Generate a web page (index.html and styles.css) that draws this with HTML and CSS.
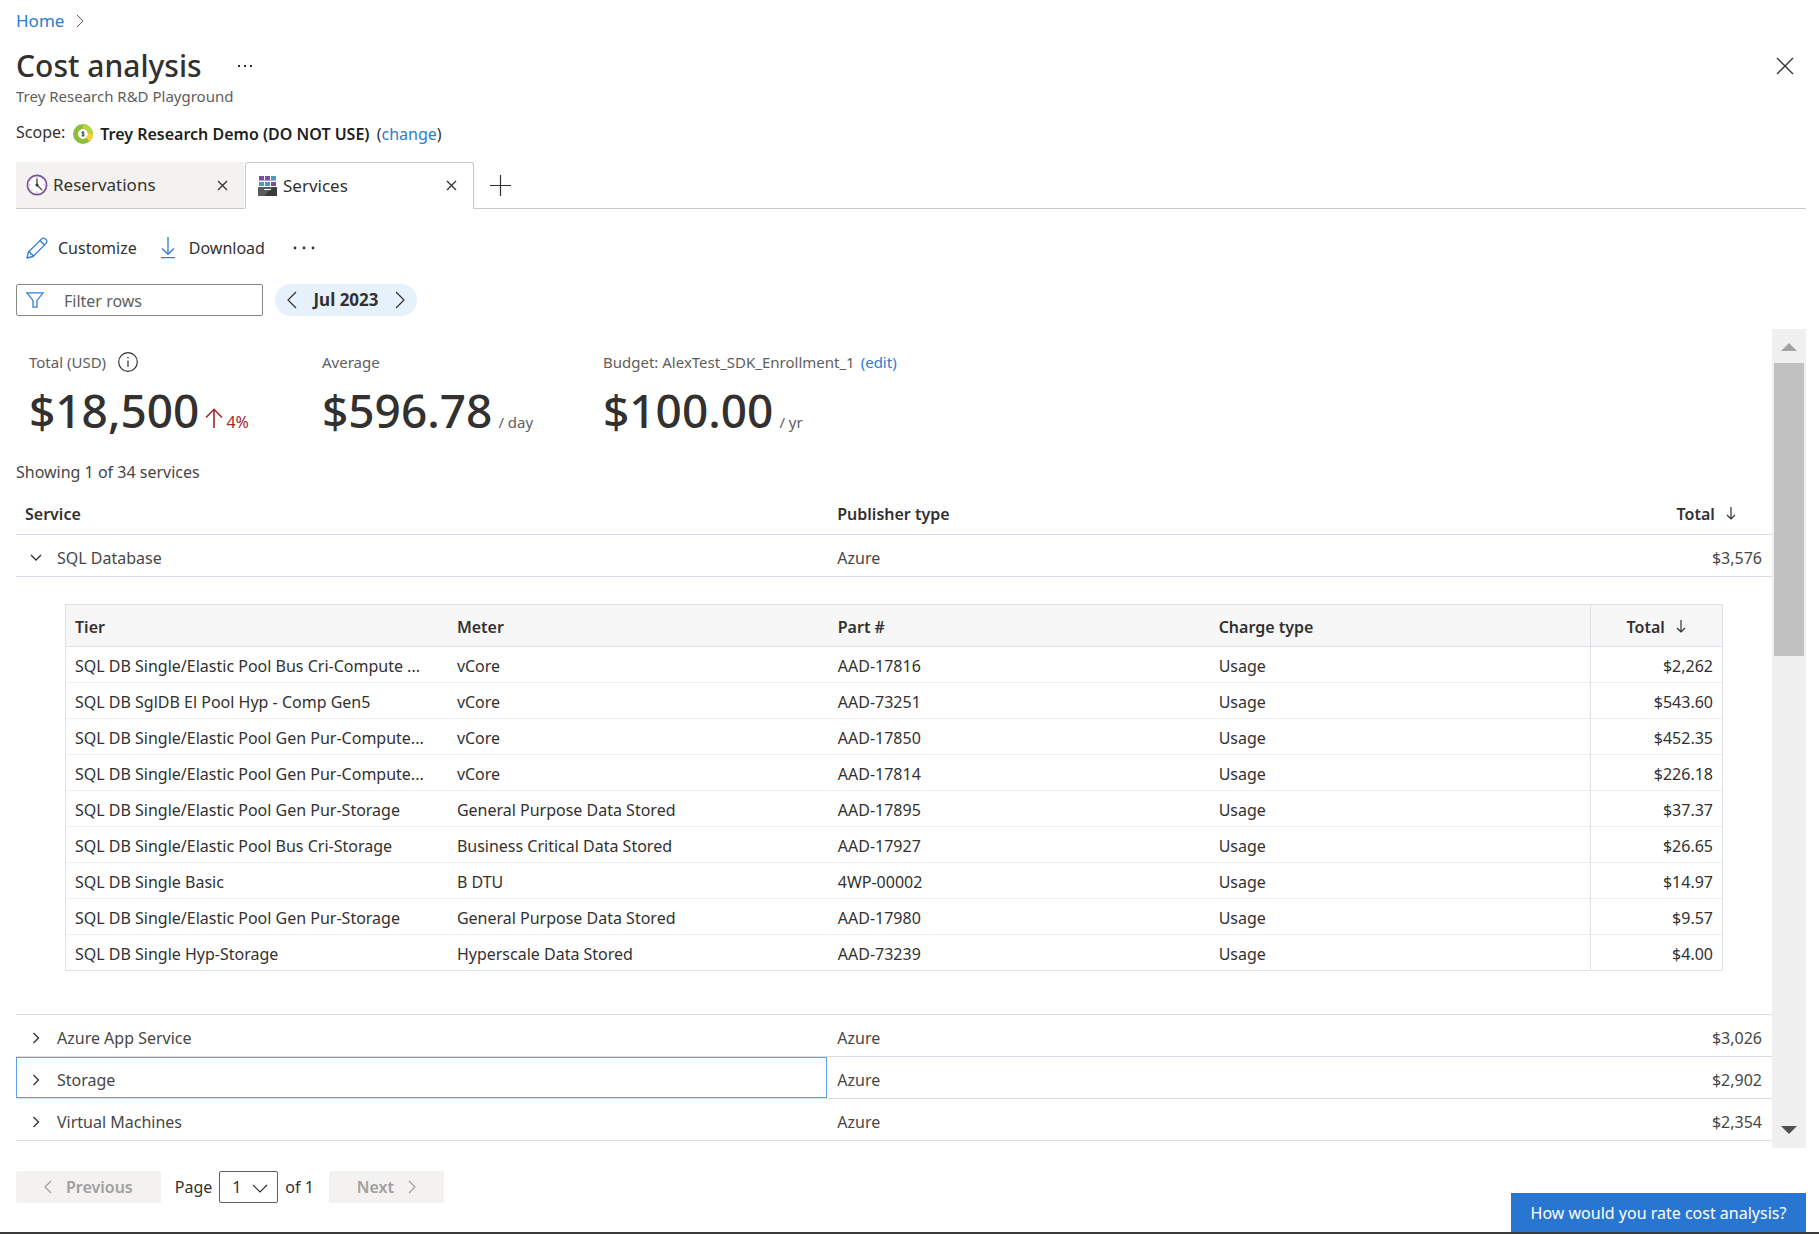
FILE: index.html
```html
<!DOCTYPE html>
<html lang="en">
<head>
    <meta charset="UTF-8">
    <meta name="viewport" content="width=device-width, initial-scale=1.0">
    <title>Cost analysis</title>
    <link rel="stylesheet" href="styles.css">
</head>
<body>
    <div class="page">
        <nav class="breadcrumb">
            <a href="#">Home</a>
            <svg width="8" height="14" viewBox="0 0 8 14"><path d="M1 1l6 6-6 6" fill="none" stroke="#605e5c"/></svg>
        </nav>

        <header class="title-row">
            <h1>Cost analysis</h1>
            <button type="button" class="icon-btn title-more" aria-label="More">
                <svg width="16" height="4" viewBox="0 0 16 4" fill="#323130"><path d="M1 1h2v2H1zM7 1h2v2H7zM13 1h2v2h-2z"/></svg>
            </button>
            <button type="button" class="icon-btn close-btn" aria-label="Close">
                <svg width="18" height="18" viewBox="0 0 18 18"><path d="M1 1l16 16M17 1L1 17" stroke="#323130" stroke-width="1.3"/></svg>
            </button>
        </header>
        <div class="subtitle">Trey Research R&amp;D Playground</div>

        <div class="scope">
            <span class="scope-label">Scope:</span>
            <svg class="scope-icon" width="20" height="20" viewBox="0 0 20 20" fill="none" stroke-width="5">
                <circle cx="10" cy="10" r="7.5" stroke="#8cbd3f"/>
                <path d="M10 2.5A7.5 7.5 0 0 1 17.5 10" stroke="#b9d445"/>
                <path d="M17.5 10A7.5 7.5 0 0 1 15 15.6" stroke="#fcd030"/>
                <path d="M11.3 8.4c-.6-.6-2.5-.6-2.5.4 0 1.2 2.6.8 2.6 2.1 0 1.1-2.1 1.1-2.8.4M10 7.2v5.6" stroke="#323130" stroke-width=".9"/>
            </svg>
            <span class="scope-name"><strong>Trey Research Demo (DO NOT USE)</strong> (<a href="#">change</a>)</span>
        </div>

        <div class="tabs">
            <div class="tab">
                <svg width="22" height="22" viewBox="0 0 22 22" fill="none">
                    <circle cx="11" cy="11" r="9.6" fill="#fff" stroke="#7b4f9d" stroke-width="1.7"/>
                    <path d="M11 3v1.5M11 17.5V19M3 11h1.5M17.5 11H19M5.3 5.3l1 1M15.7 15.7l1 1M16.7 5.3l-1 1M6.3 15.7l-1 1" stroke="#a8a8a8"/>
                    <path d="M11 4.500V11l5 5" stroke="#50505a" stroke-width="1.4"/>
                    <circle cx="11" cy="11" r="1.5" fill="#323130"/>
                </svg>
                <a href="#" class="tab-name">Reservations</a>
                <button type="button" class="icon-btn" aria-label="Close Reservations">
                    <svg width="11" height="11" viewBox="0 0 11 11"><path d="M1 1l9 9M10 1l-9 9" stroke="#323130" stroke-width="1.3"/></svg>
                </button>
            </div>
            <div class="tab active">
                <svg width="22" height="22" viewBox="0 0 22 22">
                    <path d="M3 1h5v5H3zM9 1h5v5H9zM15 7h5v4h-5z" fill="#7b4f9d"/>
                    <path d="M15 1h5v5h-5zM3 7h5v4H3zM9 7h5v4H9z" fill="#4b97c8"/>
                    <path d="M3 5h17v1H3z" fill="#b7a3cf"/>
                    <path d="M2 12h19v9H2z" fill="#3c3c3c"/>
                    <path d="M2 12h15l-9 9H2z" fill="#5c5c5c"/>
                    <path d="M8 14h7v1H8z" fill="#fff"/>
                </svg>
                <a href="#" class="tab-name">Services</a>
                <button type="button" class="icon-btn" aria-label="Close Services">
                    <svg width="11" height="11" viewBox="0 0 11 11"><path d="M1 1l9 9M10 1l-9 9" stroke="#323130" stroke-width="1.3"/></svg>
                </button>
            </div>
            <button type="button" class="icon-btn tab-add" aria-label="Add tab">
                <svg width="21" height="21" viewBox="0 0 21 21"><path d="M10.5 0v21M0 10.5h21" stroke="#323130" stroke-width="1.2"/></svg>
            </button>
        </div>

        <div class="toolbar">
            <button type="button" class="tool">
                <svg width="22" height="22" viewBox="0 0 22 22" fill="none" stroke="#2f7ed8" stroke-width="1.3" stroke-linejoin="round">
                    <path d="M1 21l1.500-6L15.600 1.900a2.500 2.500 0 0 1 3.600 0l.9.900a2.500 2.500 0 0 1 0 3.600L7 19.500z"/>
                    <path d="M14 3.500l4.500 4.500M2.500 15c1.800 0 2.600 1 2.400 2.300 1.300-.2 2.200.8 2.100 2.200"/>
                </svg>
                Customize
            </button>
            <button type="button" class="tool">
                <svg width="14" height="22" viewBox="0 0 14 22" fill="none" stroke="#2f7ed8" stroke-width="1.3"><path d="M7 0v17M1 11.500l6 5.800 6-5.800M0 20.700h14"/></svg>
                Download
            </button>
            <button type="button" class="icon-btn tool-more" aria-label="More actions">
                <svg width="22" height="4" viewBox="0 0 22 4" fill="#323130"><circle cx="2" cy="2" r="1.4"/><circle cx="11" cy="2" r="1.4"/><circle cx="20" cy="2" r="1.4"/></svg>
            </button>
        </div>

        <div class="filters">
            <label class="filter-box">
                <svg width="18" height="16" viewBox="0 0 18 16" fill="none" stroke="#2f7ed8" stroke-width="1.3"><path d="M.8.8h16.400L11 8.400v6.800H7V8.400z"/></svg>
                <input type="text" placeholder="Filter rows" aria-label="Filter rows">
            </label>
            <div class="date-pill">
                <button type="button" class="icon-btn" aria-label="Previous month">
                    <svg width="10" height="18" viewBox="0 0 10 18"><path d="M9 1L1 9l8 8" fill="none" stroke="#323130" stroke-width="1.2"/></svg>
                </button>
                <button type="button" class="month">Jul 2023</button>
                <button type="button" class="icon-btn" aria-label="Next month">
                    <svg width="10" height="18" viewBox="0 0 10 18"><path d="M1 1l8 8-8 8" fill="none" stroke="#323130" stroke-width="1.2"/></svg>
                </button>
            </div>
        </div>

        <div class="report">
            <main class="report-body">
                <div class="metrics">
                    <div class="metric">
                        <div class="metric-label">Total (USD)
                            <svg class="info" width="20" height="20" viewBox="0 0 20 20" fill="none" stroke="#323130" stroke-width="1.2"><circle cx="10" cy="10" r="9.3"/><path d="M10 8.500V15M10 5v1.500"/></svg>
                        </div>
                        <div class="metric-value">$18,500
                            <span class="trend"><svg width="18" height="20" viewBox="0 0 18 20" fill="none" stroke="#a4262c" stroke-width="1.6"><path d="M9 1v19M1 9.500L9 1.300l8 8.200"/></svg>4%</span>
                        </div>
                    </div>
                    <div class="metric">
                        <div class="metric-label">Average</div>
                        <div class="metric-value">$596.78 <span class="unit">/ day</span></div>
                    </div>
                    <div class="metric">
                        <div class="metric-label">Budget: AlexTest_SDK_Enrollment_1 <a href="#">(edit)</a></div>
                        <div class="metric-value">$100.00 <span class="unit">/ yr</span></div>
                    </div>
                </div>

                <div class="showing">Showing 1 of 34 services</div>

                <table class="services">
                    <colgroup><col class="col-service"><col><col class="col-total"></colgroup>
                    <thead>
                        <tr>
                            <th>Service</th>
                            <th>Publisher type</th>
                            <th class="sorted">Total <svg width="10" height="13" viewBox="0 0 10 13"><path d="M5 0v12M1 8l4 4 4-4" fill="none" stroke="#323130" stroke-width="1.2"/></svg></th>
                        </tr>
                    </thead>
                    <tbody>
                        <tr>
                            <td><button type="button" class="expand"><svg width="12" height="12" viewBox="0 0 12 12"><path d="M1 3l5 5 5-5"/></svg>SQL Database</button></td>
                            <td>Azure</td>
                            <td class="num">$3,576</td>
                        </tr>
                        <tr>
                            <td colspan="3" class="detail">
                                <table class="meters">
                                    <colgroup><col><col><col><col><col class="col-cost"></colgroup>
                                    <thead>
                                        <tr>
                                            <th>Tier</th>
                                            <th>Meter</th>
                                            <th>Part #</th>
                                            <th>Charge type</th>
                                            <th class="sorted">Total <svg width="10" height="13" viewBox="0 0 10 13"><path d="M5 0v12M1 8l4 4 4-4" fill="none" stroke="#323130" stroke-width="1.2"/></svg></th>
                                        </tr>
                                    </thead>
                                    <tbody>
                                        <tr><td>SQL DB Single/Elastic Pool Bus Cri-Compute ...</td><td>vCore</td><td>AAD-17816</td><td>Usage</td><td class="num">$2,262</td></tr>
                                        <tr><td>SQL DB SglDB El Pool Hyp - Comp Gen5</td><td>vCore</td><td>AAD-73251</td><td>Usage</td><td class="num">$543.60</td></tr>
                                        <tr><td>SQL DB Single/Elastic Pool Gen Pur-Compute...</td><td>vCore</td><td>AAD-17850</td><td>Usage</td><td class="num">$452.35</td></tr>
                                        <tr><td>SQL DB Single/Elastic Pool Gen Pur-Compute...</td><td>vCore</td><td>AAD-17814</td><td>Usage</td><td class="num">$226.18</td></tr>
                                        <tr><td>SQL DB Single/Elastic Pool Gen Pur-Storage</td><td>General Purpose Data Stored</td><td>AAD-17895</td><td>Usage</td><td class="num">$37.37</td></tr>
                                        <tr><td>SQL DB Single/Elastic Pool Bus Cri-Storage</td><td>Business Critical Data Stored</td><td>AAD-17927</td><td>Usage</td><td class="num">$26.65</td></tr>
                                        <tr><td>SQL DB Single Basic</td><td>B DTU</td><td>4WP-00002</td><td>Usage</td><td class="num">$14.97</td></tr>
                                        <tr><td>SQL DB Single/Elastic Pool Gen Pur-Storage</td><td>General Purpose Data Stored</td><td>AAD-17980</td><td>Usage</td><td class="num">$9.57</td></tr>
                                        <tr><td>SQL DB Single Hyp-Storage</td><td>Hyperscale Data Stored</td><td>AAD-73239</td><td>Usage</td><td class="num">$4.00</td></tr>
                                    </tbody>
                                </table>
                            </td>
                        </tr>
                        <tr>
                            <td><button type="button" class="expand"><svg width="12" height="12" viewBox="0 0 12 12"><path d="M3.500 1l5 5-5 5"/></svg>Azure App Service</button></td>
                            <td>Azure</td>
                            <td class="num">$3,026</td>
                        </tr>
                        <tr>
                            <td class="focused"><button type="button" class="expand"><svg width="12" height="12" viewBox="0 0 12 12"><path d="M3.500 1l5 5-5 5"/></svg>Storage</button></td>
                            <td>Azure</td>
                            <td class="num">$2,902</td>
                        </tr>
                        <tr>
                            <td><button type="button" class="expand"><svg width="12" height="12" viewBox="0 0 12 12"><path d="M3.500 1l5 5-5 5"/></svg>Virtual Machines</button></td>
                            <td>Azure</td>
                            <td class="num">$2,354</td>
                        </tr>
                    </tbody>
                </table>
            </main>
            <div class="scrollbar" aria-hidden="true">
                <svg width="16" height="8" viewBox="0 0 16 8"><path d="M0 8l8-8 8 8z" fill="#a3a3a3"/></svg>
                <div class="track"><div class="thumb"></div></div>
                <svg width="16" height="8" viewBox="0 0 16 8"><path d="M0 0l8 8 8-8z" fill="#505050"/></svg>
            </div>
        </div>

        <div class="pager">
            <button type="button" class="page-btn prev" disabled>
                <svg width="8" height="14" viewBox="0 0 8 14"><path d="M7 1L1 7l6 6" fill="none" stroke="#a19f9d" stroke-width="1.2"/></svg>
                Previous
            </button>
            <label for="page">Page</label>
            <div class="page-select">
                <select id="page"><option>1</option></select>
                <svg width="16" height="9" viewBox="0 0 16 9"><path d="M1 1l7 7 7-7" fill="none" stroke="#323130" stroke-width="1.2"/></svg>
            </div>
            <span>of 1</span>
            <button type="button" class="page-btn next" disabled>
                Next
                <svg width="8" height="14" viewBox="0 0 8 14"><path d="M1 1l6 6-6 6" fill="none" stroke="#a19f9d" stroke-width="1.2"/></svg>
            </button>
        </div>
    </div>

    <button type="button" class="feedback">How would you rate cost analysis?</button>
    <div class="bottom-edge"></div>
</body>
</html>
```
FILE: styles.css
```css
* { box-sizing: border-box; }
html, body { height: 100%; }
body { margin: 0; background: #fff; color: #323130; font: 16px/20px "Noto Sans", "Open Sans", sans-serif; overflow: hidden; }
a { color: #2b7cd3; text-decoration: none; }
button, input, select { font: inherit; color: inherit; }
svg { display: block; flex: none; }
.icon-btn { display: flex; align-items: center; justify-content: center; padding: 0; border: none; background: none; cursor: pointer; }

.page { display: flex; flex-direction: column; height: 100%; padding: 9px 13px 31px 16px; }

/* Header */
.breadcrumb { display: flex; align-items: center; gap: 12px; font-size: 17px; line-height: 24px; }
.title-row { display: flex; align-items: center; margin-top: 13px; }
h1 { margin: 0; font-size: 30px; line-height: 40px; font-weight: 500; }
.title-more { margin-left: 35px; }
.close-btn { margin-left: auto; margin-right: 12px; }
.subtitle { color: #605e5c; font-size: 15px; }
.scope { display: flex; align-items: flex-start; margin-top: 16px; }
.scope-icon { margin: 2px 7px 0 8px; }
.scope-name { line-height: 24px; }
.scope-name strong { font-weight: 600; color: #201f1e; margin-right: 3px; }

/* Tabs */
.tabs { display: flex; height: 47px; margin-top: 16px; box-shadow: inset 0 -1px #c8c8c8; }
.tab { display: flex; align-items: center; width: 229px; padding: 0 16px 0 10px; background: #f3f2f1; border-bottom: 1px solid #c8c8c8; border-right: 1px solid #fff; border-radius: 3px 3px 0 0; font-size: 17px; line-height: 24px; }
.tab.active { background: #fff; border: 1px solid #c8c8c8; border-bottom-color: #fff; }
.tab-name { flex: 1; margin-left: 5px; color: #323130; }
.tab-add { margin-left: 16px; }

/* Toolbar and filters */
.toolbar { display: flex; align-items: center; gap: 24px; height: 24px; margin: 27px 0 0 10px; }
.tool { display: flex; align-items: center; gap: 10px; padding: 0; border: none; background: none; cursor: pointer; }
.tool + .tool { gap: 14px; }
.tool-more { margin-left: 4px; }
.filters { display: flex; gap: 12px; margin-top: 24px; }
.filter-box { display: flex; align-items: center; width: 247px; height: 32px; padding-left: 9px; border: 1px solid #8a8886; border-radius: 2px; }
.filter-box input { flex: 1; min-width: 0; margin-left: 20px; padding: 1px 0 0; border: none; outline: none; background: none; }
.filter-box input::placeholder { color: #605e5c; opacity: 1; }
.date-pill { display: flex; align-items: center; justify-content: space-between; width: 142px; height: 32px; padding: 0 12px; background: #e6f1fb; border-radius: 16px; }
.month { padding: 0; border: none; background: none; font-size: 17px; font-weight: 700; cursor: pointer; }

/* Report */
.report { display: flex; flex: 1; min-height: 0; margin: 13px 0 23px; }
.report-body { flex: 1; min-width: 0; overflow: hidden; }
.metrics { display: grid; grid-template-columns: 293px 281px 1fr; padding: 23px 0 0 13px; }
.metric-label { display: flex; align-items: center; gap: 6px; color: #605e5c; font-size: 15px; }
.info { margin-left: 6px; }
.metric-value { display: flex; align-items: baseline; gap: 6px; margin-top: 10px; font-size: 46px; line-height: 56px; font-weight: 500; }
.trend { display: flex; align-items: baseline; gap: 3px; color: #a4262c; font-size: 16px; line-height: 20px; font-weight: 400; }
.unit { color: #605e5c; font-size: 15px; line-height: 20px; font-weight: 400; }
.showing { margin-top: 24px; color: #484644; }

table { width: 100%; border-spacing: 0; table-layout: fixed; }
th { text-align: left; font-weight: 600; }
th.sorted { text-align: right; }
th.sorted svg { display: inline-block; margin-left: 7px; }
td.num { text-align: right; }
.services { margin-top: 9px; }
.services > thead th { padding: 13px 10px 10px; border-bottom: 1px solid #d5dce6; }
.services > thead th:first-child { padding-left: 9px; }
.services > thead th.sorted { padding-right: 36px; }
.services > tbody > tr > td { padding: 13px 10px 8px; border-bottom: 1px solid #d9dee6; color: #484644; }
.col-service { width: 46.2%; }
.col-total { width: 10%; }
.expand { display: flex; align-items: center; gap: 15px; margin-left: 4px; padding: 0; border: none; background: none; cursor: pointer; }
.expand svg { fill: none; stroke: #323130; stroke-width: 1.3; }
.services td.focused { box-shadow: inset 0 0 0 1px #5ba3e6; }

.services > tbody > tr > td.detail { padding: 27px 49px 43px; }
.meters { border: 1px solid #dde1e8; color: #323130; }
.col-cost { width: 8%; }
.meters th { padding: 12px 10px 9px; background: #f7f7f7; border-bottom: 1px solid #dde1e8; }
.meters th.sorted { padding-right: 36px; }
.meters td { padding: 9px 9px 6px 10px; border-bottom: 1px solid #eceef1; white-space: nowrap; }
.meters th:first-child, .meters td:first-child { padding-left: 9px; }
.meters tr:last-child td { border-bottom: none; }
.meters th:last-child, .meters td:last-child { border-left: 1px solid #dde1e8; }

.scrollbar { display: flex; flex-direction: column; align-items: center; width: 34px; padding: 14px 0; background: #f0f0f0; }
.track { flex: 1; width: 30px; margin: 12px 0; }
.thumb { height: 39%; background: #c1c1c1; }

/* Pager */
.pager { display: flex; align-items: center; }
.page-btn { display: flex; align-items: center; gap: 14px; height: 32px; padding: 0 28px; border: none; border-radius: 2px; background: #f3f2f1; color: #a19f9d; font-weight: 600; }
.prev { margin-right: 14px; }
.next { margin-left: 15px; }
.page-select { position: relative; width: 59px; height: 32px; margin: 0 7px; }
.page-select select { width: 100%; height: 100%; padding: 0 12px; border: 1px solid #605e5c; border-radius: 2px; background: #fff; appearance: none; }
.page-select svg { position: absolute; right: 10px; top: 13px; pointer-events: none; }

.feedback { position: fixed; right: 13px; bottom: 2px; min-width: 295px; height: 39px; padding: 0 17px; border: none; background: #2976d2; color: #fff; cursor: pointer; }
.bottom-edge { position: fixed; left: 0; right: 0; bottom: 0; height: 2px; background: #3b3b3b; }
```
